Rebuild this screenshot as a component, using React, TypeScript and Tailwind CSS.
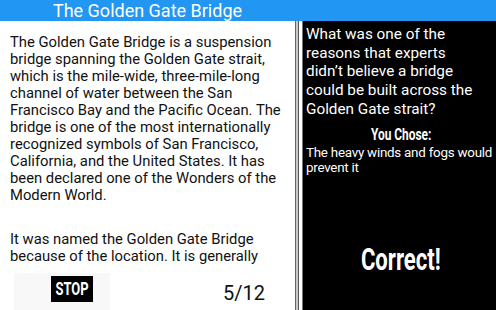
import React from "react";

const cond = "font-['Roboto',sans-serif] font-bold inline-block";

export default function App() {
  return (
    <div className="w-[496px] h-[310px] flex flex-col bg-white overflow-hidden font-['Roboto',sans-serif]">
      <div className="h-[21px] bg-[#2196f3] flex shrink-0">
        <div className="w-[295px] flex items-center justify-center text-white text-[18px] leading-[21px]">
          The Golden Gate Bridge
        </div>
      </div>
      <div className="flex flex-1 min-h-0">
        <div className="w-[295px] shrink-0 flex flex-col bg-white">
          <div className="h-[245px] overflow-hidden pt-[13px] pl-[10px] pr-[6px] text-[14.8px] leading-[17px] text-[#111]">
            <p>
              The Golden Gate Bridge is a suspension bridge spanning the Golden Gate strait, which is the mile-wide,
              three-mile-long channel of water between the San Francisco Bay and the Pacific Ocean. The bridge is one of
              the most internationally recognized symbols of San Francisco, California, and the United States. It has
              been declared one of the Wonders of the Modern World.
            </p>
            <p className="mt-[27px]">It was named the Golden Gate Bridge because of the location. It is generally</p>
          </div>
          <div className="flex-1 flex items-start">
            <div className="ml-[14px] mt-[7px] w-[96px] h-[37px] bg-[#f8f8f8] flex items-start pl-[37px] pt-[3px]">
              <div className="w-[42px] h-[26px] bg-black flex items-center justify-center overflow-hidden">
                <span className={`${cond} text-white text-[18px] leading-none scale-x-[0.72]`}>STOP</span>
              </div>
            </div>
            <div className="ml-[113px] mt-[15px] text-[20px] leading-[24px] text-[#111]">5/12</div>
          </div>
        </div>
        <div className="w-[8px] flex shrink-0">
          <div className="w-[1px] bg-[#666]" />
          <div className="w-[2px] bg-[#c8c8c8]" />
          <div className="w-[1px] bg-[#555]" />
          <div className="w-[3px] bg-white" />
          <div className="w-[1px] bg-[#777]" />
        </div>
        <div className="flex-1 min-w-0 overflow-hidden bg-black text-white flex flex-col pl-[3px]">
          <div className="pt-[4px] text-[15.3px] leading-[18.7px] whitespace-nowrap">
            What was one of the
            <br />
            reasons that experts
            <br />
            didn’t believe a bridge
            <br />
            could be built across the
            <br />
            Golden Gate strait?
          </div>
          <div className="text-center mt-[5px] leading-[20px]">
            <span className={`${cond} text-[17px] scale-x-[0.7]`}>You Chose:</span>
          </div>
          <div className="text-[13.4px] leading-[15px] tracking-[-0.25px] whitespace-nowrap">
            The heavy winds and fogs would
            <br />
            prevent it
          </div>
          <div className="text-center mt-[66px]">
            <span className={`${cond} text-[32px] leading-[36px] scale-x-[0.69]`}>Correct!</span>
          </div>
        </div>
      </div>
    </div>
  );
}
